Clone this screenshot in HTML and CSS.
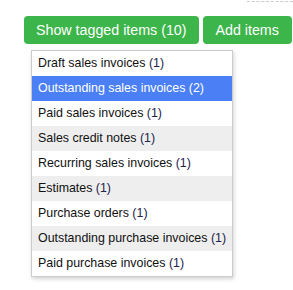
FILE: index.html
```html
<!DOCTYPE html>
<html lang="en">
<head>
    <meta charset="UTF-8">
    <title>Tagged items</title>
    <link rel="stylesheet" href="styles.css">
</head>
<body>
    <div class="corner-line"></div>

    <div class="toolbar">
        <div class="dropdown">
            <button class="btn btn-toggle">Show tagged items (10)</button>
            <ul class="menu">
                <li>Draft sales invoices <span class="count">(1)</span></li>
                <li class="active">Outstanding sales invoices (2)</li>
                <li>Paid sales invoices <span class="count">(1)</span></li>
                <li class="shade">Sales credit notes <span class="count">(1)</span></li>
                <li>Recurring sales invoices <span class="count">(1)</span></li>
                <li class="shade">Estimates <span class="count">(1)</span></li>
                <li>Purchase orders <span class="count">(1)</span></li>
                <li class="shade">Outstanding purchase invoices <span class="count">(1)</span></li>
                <li>Paid purchase invoices <span class="count">(1)</span></li>
            </ul>
        </div>
        <button class="btn">Add items</button>
    </div>
</body>
</html>
```

FILE: styles.css
```css
* {
    margin: 0;
    padding: 0;
    box-sizing: border-box;
}

body {
    font-family: 'Liberation Sans', Arial, sans-serif;
    background: #fff;
    color: #111;
    width: 293px;
    height: 290px;
    overflow: hidden;
}

/* faint dashed edge at the top right */
.corner-line {
    margin-left: 247px;
    margin-top: 1px;
    height: 0;
    border-top: 1px dashed #ccc;
}

.toolbar {
    display: flex;
    gap: 4px;
    padding: 14px 0 0 24px;
    align-items: flex-start;
}

.dropdown {
    position: relative;
}

.btn {
    display: block;
    height: 28px;
    padding: 0 13px;
    background: #3cb54a;
    color: #fff;
    border: none;
    border-radius: 4px;
    font-family: inherit;
    font-size: 14.25px;
    line-height: 28px;
    white-space: nowrap;
}

.btn-toggle {
    padding: 0 12px;
}

.menu {
    position: absolute;
    top: 34px;
    left: 7px;
    width: 202px;
    list-style: none;
    background: #fff;
    border: 1px solid #ccc;
    box-shadow: 1px 2px 4px rgba(0, 0, 0, 0.18);
}

.menu li {
    height: 25px;
    line-height: 25px;
    padding-left: 6px;
    font-size: 12.4px;
    color: #111;
    white-space: nowrap;
}

.menu li.shade {
    background: #eee;
}

.menu li.active {
    background: #4a7ff5;
    color: #fff;
}

.count {
    color: #22224a;
}
```
